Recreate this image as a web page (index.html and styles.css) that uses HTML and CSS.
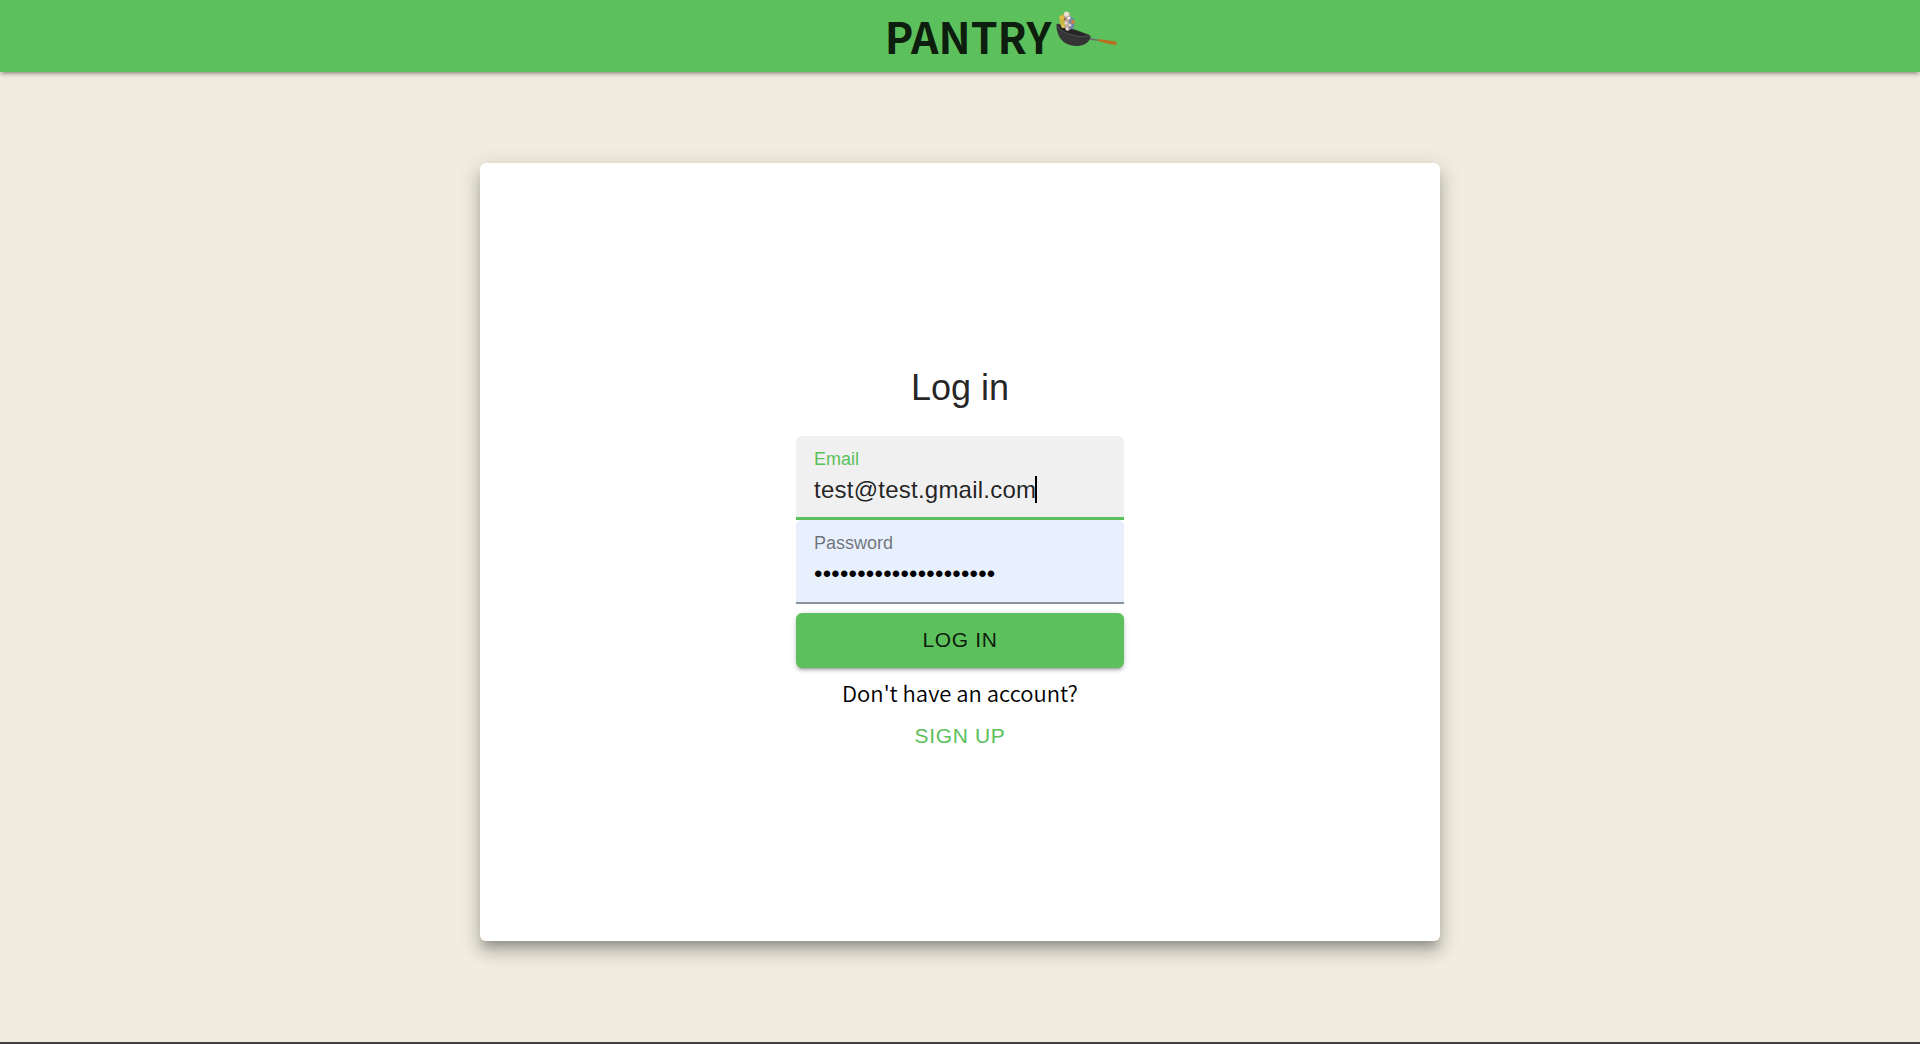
FILE: index.html
```html
<!DOCTYPE html>
<html lang="en">
<head>
<meta charset="utf-8">
<meta name="viewport" content="width=device-width, initial-scale=1">
<title>Pantry</title>
<link rel="stylesheet" href="styles.css">
</head>
<body>
<header class="app-bar">
  <h1 class="brand">PANTRY</h1>
  <svg class="brand-pan" viewBox="0 0 62 36" aria-hidden="true">
    <path d="M34 27 L44 29 L44 30 L34 29Z" fill="#66706b"/>
    <path d="M42 28 Q51 29 60 30.500 Q61.500 32 60 34 Q51 33 42 30Z" fill="#b87020"/>
    <path d="M.5 13 Q4 12 10 16 Q22 19 31 23 Q36 24 34 28 Q31 34 22 35 Q10 35.500 4 27 Q0 20 .5 13Z" fill="#363536"/>
    <path d="M1 14 Q7 14 12 18 Q22 20 33 25 Q21 27 11 22 Q4 19 1 14Z" fill="#252525"/>
    <path d="M1 14 Q5 21 13 23 Q23 27 33 25" fill="none" stroke="#5b5b5b" stroke-width=".7"/>
    <path d="M3 5 L8 3 L11 6 L11 17 L6 17 L4 13Z" fill="#c8b548"/>
    <path d="M8 2 L13 1 L15 6 L16 17 L12 20 L9 17Z" fill="#b8aaa0"/>
    <path d="M13 5 L17 7 L19 11 L17 18 L13 18Z" fill="#7183a6"/>
    <circle cx="10.500" cy="3" r="2.500" fill="#ece0d5"/>
    <circle cx="13" cy="7" r="1.600" fill="#f2eee5"/>
    <circle cx="17" cy="11" r="2" fill="#c98443"/>
    <circle cx="6" cy="7" r="2" fill="#dfbd45"/>
    <circle cx="10" cy="12" r="1.500" fill="#e9d6d2"/>
    <circle cx="7" cy="15" r="1.500" fill="#e0c75b"/>
    <circle cx="14" cy="14" r="1.500" fill="#ded2ce"/>
    <circle cx="11" cy="18" r="1.500" fill="#eee3de"/>
    <circle cx="9" cy="8" r="1.200" fill="#9c6245"/>
  </svg>
</header>
<main class="page">
  <section class="card">
    <form class="login">
      <h2 class="login-title">Log in</h2>
      <div class="field field-active">
        <label class="field-label" for="email">Email</label>
        <input class="field-input" id="email" type="email" value="test@test.gmail.com">
        <span class="caret"></span>
      </div>
      <div class="field field-filled">
        <label class="field-label" for="password">Password</label>
        <input class="field-input" id="password" type="password" value="correcthorsebatteries">
      </div>
      <button class="button button-primary" type="submit">LOG IN</button>
      <p class="hint">Don't have an account?</p>
      <button class="button button-text" type="button">SIGN UP</button>
    </form>
  </section>
</main>
</body>
</html>
```
FILE: styles.css
```css
:root {
  --green: #5cc05c;
  --ink: rgba(0, 0, 0, 0.87);
  --raised: 0 4px 2px -3px rgba(0, 0, 0, 0.2), 0 3px 3px rgba(0, 0, 0, 0.14), 0 1px 7px rgba(0, 0, 0, 0.12);
}

* {
  box-sizing: border-box;
}

body {
  display: flex;
  flex-direction: column;
  min-height: 100vh;
  margin: 0;
  border-bottom: 2px solid #423f43;
  background: #f0ecdf;
  color: var(--ink);
  font-family: "Liberation Sans", Arial, sans-serif;
}

.app-bar {
  display: flex;
  align-items: center;
  justify-content: center;
  gap: 5px;
  height: 72px;
  padding: 0 0 2px 83px;
  background: var(--green);
  box-shadow: var(--raised);
}

.brand {
  margin: 0;
  font: 700 43px/70px "Noto Sans CJK JP", sans-serif;
}

.brand-pan {
  width: 62px;
  height: 36px;
  margin-bottom: 12px;
}

.page {
  display: flex;
  flex: 1;
  justify-content: center;
  padding: 91px 0 101px;
}

.card {
  display: flex;
  align-items: center;
  justify-content: center;
  width: 50%;
  padding-top: 14px;
  border-radius: 6px;
  background: #fff;
  box-shadow: 0 8px 8px -4px rgba(0, 0, 0, 0.2), 0 12px 15px 1px rgba(0, 0, 0, 0.14), 0 5px 21px 3px rgba(0, 0, 0, 0.12);
}

.login {
  display: flex;
  flex-direction: column;
  align-items: center;
  width: 328px;
}

.login-title {
  margin: 0 0 24px;
  font-size: 36px;
  font-weight: 400;
  line-height: 48px;
}

.field {
  position: relative;
  display: flex;
  flex-direction: column;
  gap: 2px;
  width: 100%;
  height: 84px;
  padding: 12px 18px 0;
  border-bottom: 2px solid #8c929d;
  border-radius: 6px 6px 0 0;
}

.field-active {
  border-bottom: 3px solid var(--green);
  background: #f0f0f0;
}

.field-filled {
  background: #e8f0fe;
}

.field-label {
  color: rgba(0, 0, 0, 0.54);
  font-size: 18px;
  line-height: 22px;
}

.field-active .field-label {
  color: var(--green);
}

.field-input {
  width: 100%;
  height: 36px;
  padding: 0;
  border: 0;
  outline: 0;
  background: transparent;
  color: var(--ink);
  font: 400 24px/36px "Liberation Sans", Arial, sans-serif;
  letter-spacing: 0.01em;
}

.field-filled .field-input {
  color: #000;
}

.caret {
  position: absolute;
  top: 40px;
  left: 239px;
  width: 2px;
  height: 27px;
  background: #000;
}

.button {
  border: 0;
  border-radius: 6px;
  background: transparent;
  font: 400 21px/36px "Liberation Sans", Arial, sans-serif;
  letter-spacing: 0.03em;
}

.button-primary {
  width: 100%;
  height: 55px;
  margin-top: 9px;
  padding: 0 0 2px;
  background: var(--green);
  box-shadow: var(--raised);
  color: var(--ink);
}

.hint {
  margin: 6px 0 8px;
  color: #000;
  font: 350 22px/36px "Noto Sans CJK JP", sans-serif;
}

.button-text {
  height: 36px;
  padding: 0 12px;
  color: var(--green);
}
```
